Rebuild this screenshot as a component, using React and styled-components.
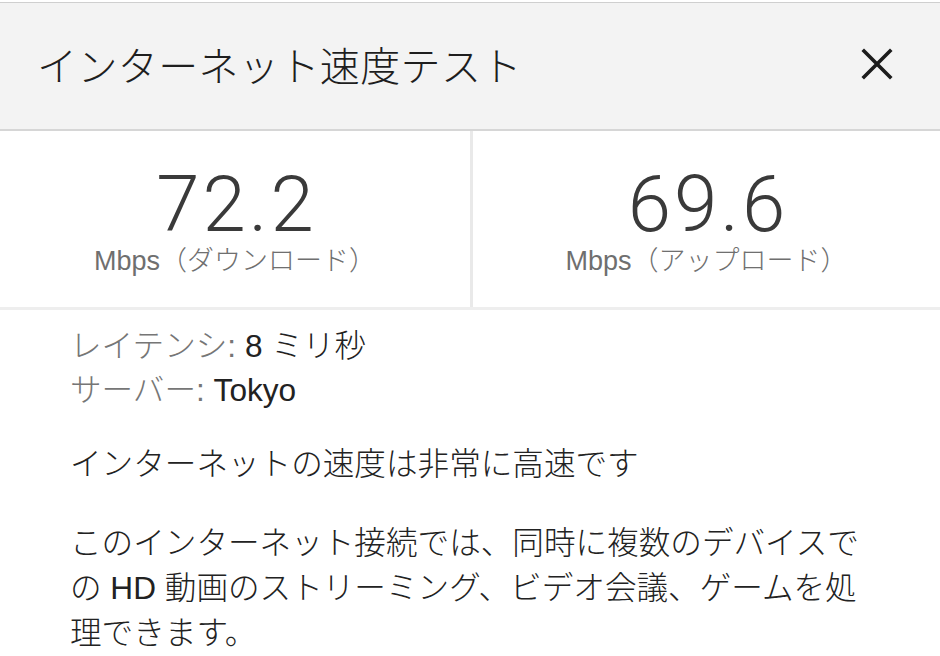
import React from 'react';
import styled, { createGlobalStyle } from 'styled-components';

const GlobalStyle = createGlobalStyle`
  html, body {
    margin: 0;
    padding: 0;
    background: #fff;
  }
  body {
    font-family: "Liberation Sans", "Noto Sans CJK JP", sans-serif;
    color: #222;
    -webkit-font-smoothing: antialiased;
  }
`;

const jp = `"Liberation Sans", "Noto Sans CJK JP", sans-serif`;

const Card = styled.div`
  width: 940px;
  height: 656px;
  overflow: hidden;
  padding-top: 2px;
  box-sizing: border-box;
`;

const Header = styled.header`
  height: 129px;
  background: #f3f3f3;
  border-top: 1px solid #cfcfcf;
  border-bottom: 2px solid #d6d6d6;
  display: flex;
  align-items: center;
  justify-content: space-between;
  padding: 0 38px 4px 37px;
  box-sizing: border-box;
`;

const Title = styled.h1`
  margin: 0;
  font-family: ${jp};
  font-size: 40px;
  font-weight: 300;
  color: #1e1e1e;
  letter-spacing: 0.4px;
`;

const CloseButton = styled.button`
  border: 0;
  background: none;
  padding: 0;
  margin-right: 8px;
  width: 34px;
  height: 34px;
  display: flex;
  align-items: center;
  justify-content: center;
  cursor: pointer;
`;

const Stats = styled.section`
  display: grid;
  grid-template-columns: 1fr 1fr;
  height: 179px;
  border-bottom: 3px solid #eeeeee;
  box-sizing: border-box;
`;

const Stat = styled.div`
  display: flex;
  flex-direction: column;
  align-items: center;
  justify-content: center;
  padding-top: 8px;
  border-left: ${(p) => (p.$divided ? '3px solid #e9e9e9' : 'none')};
`;

const Value = styled.div`
  font-family: "Roboto", "Liberation Sans", sans-serif;
  font-weight: 300;
  font-size: 78px;
  line-height: 72px;
  color: #3a3a3a;
  letter-spacing: 3px;
  margin-right: -3px;
`;

const Unit = styled.div`
  font-family: ${jp};
  font-weight: 300;
  font-size: 27px;
  line-height: 32px;
  color: #6f6f6f;
  margin-top: 4px;
`;

const Body = styled.section`
  padding: 14px 70px 0 70px;
  font-family: ${jp};
  font-weight: 300;
  font-size: 31.6px;
`;

const InfoRow = styled.div`
  line-height: 44px;
  color: #222;
`;

const Label = styled.span`
  color: #767676;
`;

const Summary = styled.p`
  margin: 30px 0 0;
  line-height: 44px;
  color: #222;
`;

const Description = styled.p`
  margin: 35px 0 0;
  line-height: 45px;
  color: #222;
  width: 810px;
`;

function CloseIcon() {
  return (
    <svg width="32" height="32" viewBox="0 0 32 32">
      <path d="M3 3 L29 29 M29 3 L3 29" stroke="#1c1c1c" strokeWidth="3.6" strokeLinecap="square" />
    </svg>
  );
}

const stats = [
  { value: '72.2', unit: 'Mbps（ダウンロード）' },
  { value: '69.6', unit: 'Mbps（アップロード）' },
];

export default function App() {
  return (
    <>
      <GlobalStyle />
      <Card>
        <Header>
          <Title>インターネット速度テスト</Title>
          <CloseButton aria-label="閉じる">
            <CloseIcon />
          </CloseButton>
        </Header>
        <Stats>
          {stats.map((s, i) => (
            <Stat key={s.unit} $divided={i > 0}>
              <Value>{s.value}</Value>
              <Unit>{s.unit}</Unit>
            </Stat>
          ))}
        </Stats>
        <Body>
          <InfoRow>
            <Label>レイテンシ:</Label> 8 ミリ秒
          </InfoRow>
          <InfoRow>
            <Label>サーバー:</Label> Tokyo
          </InfoRow>
          <Summary>インターネットの速度は非常に高速です</Summary>
          <Description>
            このインターネット接続では、同時に複数のデバイスでの HD 動画のストリーミング、ビデオ会議、ゲームを処理できます。
          </Description>
        </Body>
      </Card>
    </>
  );
}
